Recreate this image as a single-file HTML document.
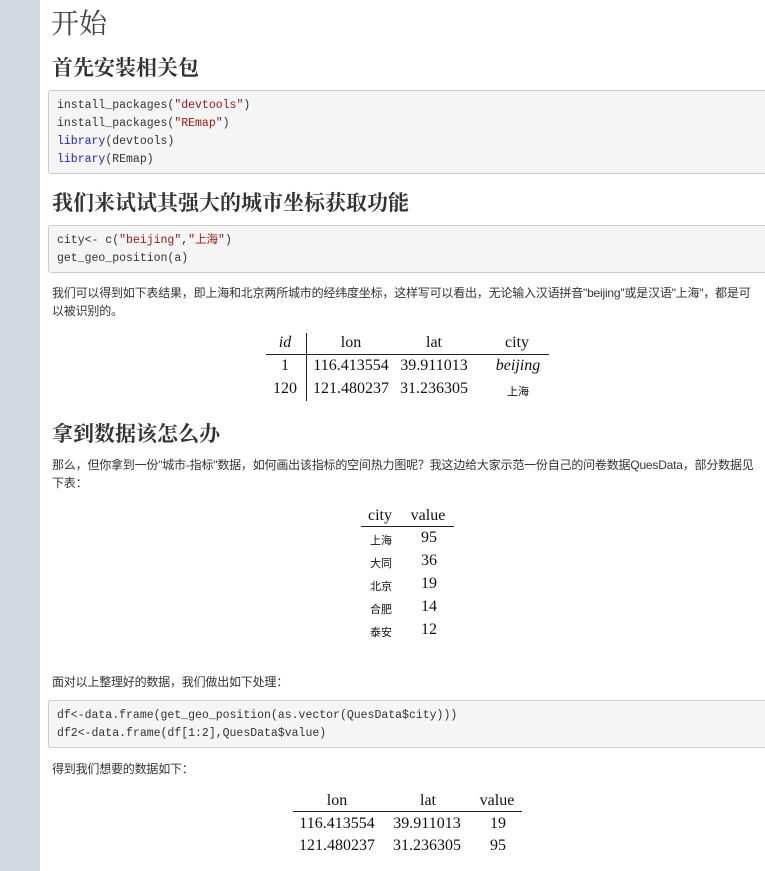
<!DOCTYPE html>
<html><head><meta charset="utf-8"><style>
body{margin:0;width:765px;height:871px;overflow:hidden;background:#fff;position:relative;font-family:"Liberation Sans","Noto Sans CJK SC",sans-serif;color:#333}
.sb{position:absolute;left:0;top:0;width:40px;height:871px;background:#d3d9e0}
.a{position:absolute;white-space:nowrap}
h1,h2{margin:0;font-weight:normal;color:#333;font-family:"Liberation Serif","Noto Serif CJK SC",serif}
.code{position:absolute;left:48px;width:740px;background:#f5f5f5;border:1px solid #ccc;border-radius:3px;font-family:"Liberation Mono",monospace;font-size:11.5px;line-height:18px;padding:6px 8px;box-sizing:border-box;color:#333}
.s{color:#a31515}.k{color:#2222cc}
.p{font-size:12px;line-height:18px;color:#333;left:52px;letter-spacing:-0.2px}
.t{font-family:"Liberation Serif","DejaVu Serif",serif;font-size:16px;color:#111}
.t span{position:absolute;transform:translateX(-50%)}
.cj{font-family:"Noto Sans CJK SC",sans-serif;font-size:11px!important}
.hl{position:absolute;height:1px;background:#222}
</style></head><body>
<div class="sb"></div>
<h1 class="a" style="left:51px;top:2px;font-size:28px;color:#444">开始</h1>
<h2 class="a" style="left:52px;top:52px;font-size:21px;font-weight:bold">首先安装相关包</h2>
<div class="code" style="top:90px;height:84px">install_packages(<span class="s">"devtools"</span>)<br>install_packages(<span class="s">"REmap"</span>)<br><span class="k">library</span>(devtools)<br><span class="k">library</span>(REmap)</div>
<h2 class="a" style="left:52px;top:187px;font-size:21px;font-weight:bold">我们来试试其强大的城市坐标获取功能</h2>
<div class="code" style="top:225px;height:48px">city&lt;- c(<span class="s">"beijing"</span>,<span class="s">"上海"</span>)<br>get_geo_position(a)</div>
<div class="a p" style="top:284px">我们可以得到如下表结果，即上海和北京两所城市的经纬度坐标，这样写可以看出，无论输入汉语拼音"beijing"或是汉语"上海"，都是可<br>以被识别的。</div>
<div class="t">
<span style="left:285px;top:334px;font-style:italic">id</span><span style="left:351px;top:334px">lon</span><span style="left:434px;top:334px">lat</span><span style="left:517px;top:334px">city</span>
<span style="left:285px;top:357px">1</span><span style="left:351px;top:357px">116.413554</span><span style="left:434px;top:357px">39.911013</span><span style="left:518px;top:357px;font-style:italic">beijing</span>
<span style="left:285px;top:380px">120</span><span style="left:351px;top:380px">121.480237</span><span style="left:434px;top:380px">31.236305</span><span class="cj" style="left:518px;top:383px">上海</span>
</div>
<div class="hl" style="left:266px;top:354px;width:283px"></div>
<div style="position:absolute;left:306px;top:333px;width:1px;height:68px;background:#222"></div>
<h2 class="a" style="left:52px;top:418px;font-size:21px;font-weight:bold">拿到数据该怎么办</h2>
<div class="a p" style="top:456px">那么，但你拿到一份"城市-指标"数据，如何画出该指标的空间热力图呢？我这边给大家示范一份自己的问卷数据QuesData，部分数据见<br>下表：</div>
<div class="t">
<span style="left:380px;top:507px">city</span><span style="left:428px;top:507px">value</span>
<span class="cj" style="left:381px;top:532px">上海</span><span style="left:429px;top:529px">95</span>
<span class="cj" style="left:381px;top:555px">大同</span><span style="left:429px;top:552px">36</span>
<span class="cj" style="left:381px;top:578px">北京</span><span style="left:429px;top:575px">19</span>
<span class="cj" style="left:381px;top:601px">合肥</span><span style="left:429px;top:598px">14</span>
<span class="cj" style="left:381px;top:624px">泰安</span><span style="left:429px;top:621px">12</span>
</div>
<div class="hl" style="left:361px;top:526px;width:93px"></div>
<div class="a p" style="top:673px">面对以上整理好的数据，我们做出如下处理：</div>
<div class="code" style="top:700px;height:48px">df&lt;-data.frame(get_geo_position(as.vector(QuesData$city)))<br>df2&lt;-data.frame(df[1:2],QuesData$value)</div>
<div class="a p" style="top:760px">得到我们想要的数据如下：</div>
<div class="t">
<span style="left:337px;top:792px">lon</span><span style="left:428px;top:792px">lat</span><span style="left:497px;top:792px">value</span>
<span style="left:337px;top:815px">116.413554</span><span style="left:427px;top:815px">39.911013</span><span style="left:498px;top:815px">19</span>
<span style="left:337px;top:837px">121.480237</span><span style="left:427px;top:837px">31.236305</span><span style="left:498px;top:837px">95</span>
</div>
<div class="hl" style="left:293px;top:811px;width:229px"></div>
</body></html>
